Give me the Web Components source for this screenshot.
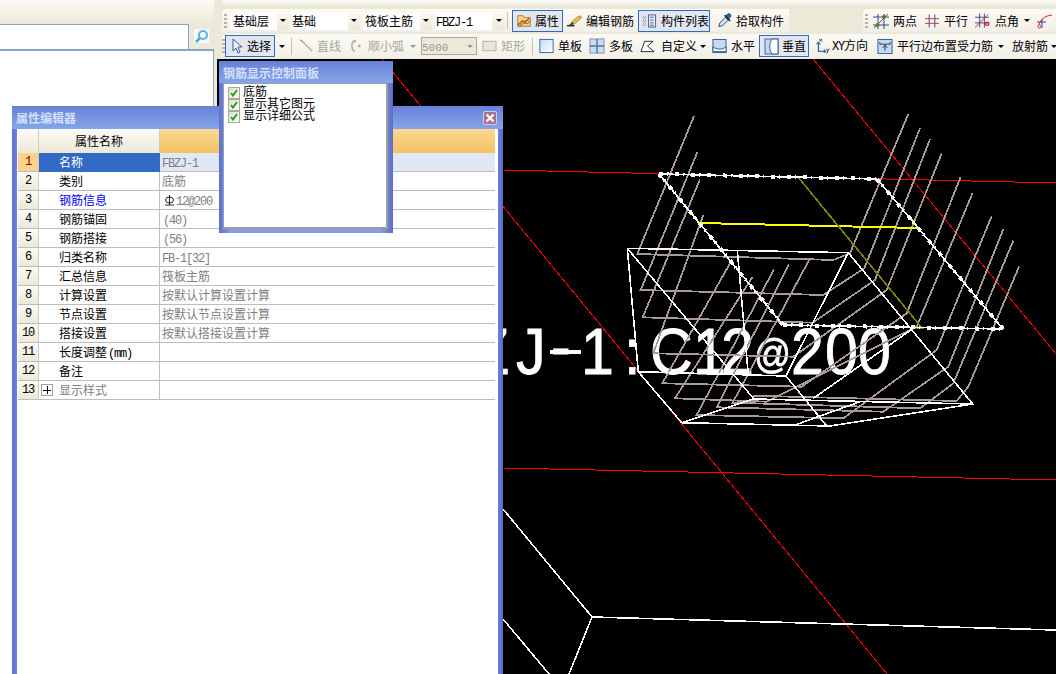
<!DOCTYPE html>
<html lang="zh"><head><meta charset="utf-8"><title>钢筋</title>
<style>
html,body{margin:0;padding:0;height:100%;overflow:hidden;background:#ece9d8}
body{font:12px/14px "Noto Sans CJK SC","Liberation Sans",sans-serif;color:#000}
svg{display:block}
</style></head><body>
<app-shell>
  <left-pane slot="left"></left-pane>
  <tb-stack slot="tools">
    <tb-bar style="height:5px;margin-bottom:4px" plain></tb-bar>
    <tb-row>
      <tb-bar style="width:567px;height:23px">
        <tb-combo style="width:59px;margin-right:2px" btn="12" pad="3">基础层</tb-combo>
        <tb-combo style="width:69px;margin-right:3px" btn="12" pad="1">基础</tb-combo>
        <tb-combo style="width:69px;margin-right:3px" btn="12" pad="2">筏板主筋</tb-combo>
        <tb-combo style="width:70px" btn="13" pad="1"><mono-t>FBZJ-1</mono-t></tb-combo>
        <tb-sep style="margin:0 4px 0 2px"></tb-sep>
        <tb-btn style="width:51px" active gap="3"><svg slot="icon" width="16" height="16" viewBox="0 0 18 16"><path d="M2 2h6l1 2h7v10H2z" fill="#f6d28a" stroke="#a8783a"/><path d="M2 13l5-5 3 1 5-4" fill="none" stroke="#c8601a" stroke-width="2"/><path d="M4 14l5-4 4 1 3-3" fill="none" stroke="#5a4a2a" stroke-width="1"/></svg>属性</tb-btn>
        <tb-btn style="width:73px" gap="3" pl="2"><svg slot="icon" width="17" height="16" viewBox="0 0 18 16"><path d="M1 13h8" stroke="#222" stroke-width="1.5"/><path d="M1 13c3-1 4-2 5-4l3 2c-2 2-5 2-8 2z" fill="#444"/><path d="M6 9l7-6 3 2-7 6z" fill="#f0c040" stroke="#8a6a20" stroke-width=".7"/><path d="M13 3l2-1 2 2-1 1z" fill="#d88"/></svg>编辑钢筋</tb-btn>
        <tb-btn style="width:72px;margin-left:2px" active gap="4"><svg slot="icon" width="15" height="16" viewBox="0 0 16 16"><path d="M1 3h3v2H1zM1 7h3v2H1zM1 11h3v2H1z" fill="none" stroke="#888" stroke-dasharray="1 1"/><rect x="7" y="1.5" width="7.5" height="13" fill="#e8f0fa" stroke="#557"/><path d="M8.500 4h4M8.500 7h4M8.500 10h4M8.500 12.500h4" stroke="#35a"/></svg>构件列表</tb-btn>
        <tb-btn style="width:75px;margin-left:2px" gap="3" pl="4"><svg slot="icon" width="16" height="17" viewBox="0 0 17 17"><path d="M2 15l1-4 6-6 3 3-6 6z" fill="#cde3f5" stroke="#345"/><path d="M9 4l2-2c2-2 5 1 3 3l-2 2z" fill="#1d6fb8" stroke="#123"/><path d="M8 3l6 6" stroke="#123" stroke-width="1.6"/></svg>拾取构件</tb-btn>
      </tb-bar>
      <tb-bar style="width:193px;height:23px;margin-left:74px">
        <tb-btn style="width:48px" gap="4" pl="1"><svg slot="icon" width="16" height="16" viewBox="0 0 16 16"><path d="M5 1v15M11 1v15M0 4h16M0 12h16" stroke="#334a8c"/><path d="M1 15L15 1" stroke="#e01818"/><circle cx="4.500" cy="12" r="2" fill="#3a8a2a"/><circle cx="11" cy="4" r="2" fill="#3a8a2a"/></svg>两点</tb-btn>
        <tb-btn style="width:50px" gap="5" pl="5"><svg slot="icon" width="14" height="14" viewBox="0 0 15 14"><path d="M4.500 0v14M10.500 0v14" stroke="#334a8c"/><path d="M0 4.500h15M0 9.500h15" stroke="#c03040"/></svg>平行</tb-btn>
        <tb-btn style="width:51px" gap="5" pl="5"><svg slot="icon" width="15" height="16" viewBox="0 0 16 16"><path d="M5 0v15M10 0v15M0 4h15M0 10h15" stroke="#334a8c"/><path d="M0 15L14 1" stroke="#e01818"/><circle cx="13" cy="11" r="1.800" fill="none" stroke="#e01818" stroke-width="1.300"/></svg>点角</tb-btn>
        <tb-arrow style="width:14px"></tb-arrow>
        <tb-btn style="width:22px" pl="2"><svg slot="icon" width="16" height="16" viewBox="0 0 16 16"><path d="M2 14C2 7 7 3 15 2" fill="none" stroke="#e01818"/><path d="M0 9h9M5 6v9" stroke="#334a8c"/><circle cx="2.500" cy="13.500" r="1.500" fill="#fff" stroke="#e01818"/></svg></tb-btn>
      </tb-bar>
    </tb-row>
    <tb-row style="margin-top:2px">
      <tb-bar style="width:834px;height:24px" tight>
        <tb-btn style="width:50px" active gap="4" pl="5"><svg slot="icon" width="12" height="16" viewBox="0 0 12 16"><path d="M2 1v12l3-3 2 5 2-1-2-5h4z" fill="#eef" stroke="#3a5a9a"/></svg>选择</tb-btn>
        <tb-arrow style="width:13px"></tb-arrow>
        <tb-sep style="margin:0 3px 0 3px"></tb-sep>
        <tb-btn style="width:50px" disabled gap="3" pl="3"><svg slot="icon" width="15" height="16" viewBox="0 0 17 16"><path d="M2 1l13 13" stroke="#b0b0a8" stroke-width="1.500"/><path d="M1 1l2 2" stroke="#888"/></svg>直线</tb-btn>
        <tb-btn style="width:60px" disabled gap="4" pl="3"><svg slot="icon" width="15" height="16" viewBox="0 0 16 16"><path d="M6 2C2 4 2 11 6 14" fill="none" stroke="#b0b0a8" stroke-width="1.500"/><path d="M4 1l4 1-2 3z" fill="#b0b0a8"/><circle cx="11" cy="8" r="1.500" fill="#b0b0a8"/></svg>顺小弧</tb-btn>
        <tb-arrow style="width:16px" disabled></tb-arrow>
        <tb-combo style="width:56px;height:18px" btn="13" dis><mono-t size="11">5000</mono-t></tb-combo>
        <tb-btn style="width:49px;margin-left:3px" disabled gap="4" pl="1"><svg slot="icon" width="15" height="14" viewBox="0 0 16 14"><rect x="1" y="2" width="14" height="10" fill="#e8e6dc" stroke="#b4b2a6"/></svg>矩形</tb-btn>
        <tb-sep style="margin:0 3px 0 3px"></tb-sep>
        <tb-btn style="width:48px" gap="4" pl="2"><svg slot="icon" width="15" height="16" viewBox="0 0 17 17"><defs><linearGradient id="g1" x1="0" y1="0" x2="1" y2="1"><stop offset="0" stop-color="#c4dcf6"/><stop offset="1" stop-color="#fff"/></linearGradient></defs><rect x="1" y="1" width="15" height="15" fill="url(#g1)" stroke="#2d5a9e"/></svg>单板</tb-btn>
        <tb-btn style="width:52px" gap="4" pl="4"><svg slot="icon" width="16" height="16" viewBox="0 0 17 17"><rect x="1" y="1" width="15" height="15" fill="#c8dcf2" stroke="#7a93b5"/><path d="M8.500 1v15M1 8.500h15" stroke="#56769f" stroke-width="1.500"/></svg>多板</tb-btn>
        <tb-btn style="width:62px" gap="6" pl="3"><svg slot="icon" width="15" height="14" viewBox="0 0 16 14"><path d="M1 13L5 2h9L8 7l7 6z" fill="#fff" stroke="#222"/></svg>自定义</tb-btn>
        <tb-arrow style="width:10px"></tb-arrow>
        <tb-btn style="width:51px" gap="4" pl="3"><svg slot="icon" width="15" height="16" viewBox="0 0 16 16"><rect x="1" y="1" width="14" height="14" fill="#c4d8f0" stroke="#2d5a9e"/><path d="M1 9c4 3 10 3 14 0v5H1z" fill="#fff" stroke="#2d5a9e"/></svg>水平</tb-btn>
        <tb-btn style="width:50px" active gap="3" pl="4"><svg slot="icon" width="15" height="17" viewBox="0 0 15 17"><rect x="1" y="1" width="13" height="15" fill="#c4d8f0" stroke="#4a6a9a"/><path d="M8 1c-3 4-3 11 0 15h6V1z" fill="#fff" stroke="#2d5a9e"/></svg>垂直</tb-btn>
        <tb-btn style="width:64px" gap="1" pl="4"><svg slot="icon" width="17" height="17" viewBox="0 0 19 17"><path d="M5 4v10h7" fill="none" stroke="#2d6ab0" stroke-width="1.500"/><path d="M2 6l3-3 3 3zM11 11l3 3-3 2z" fill="#2d6ab0"/><path d="M6 0l3 3M9 0L6 3M14 11l1.500 2 1.500-2M15.500 13l-1 3" stroke="#222" fill="none"/></svg><span><mono-t>XY</mono-t>方向</span></tb-btn>
        <tb-btn style="width:136px" gap="4" pl="3"><svg slot="icon" width="16" height="17" viewBox="0 0 17 17"><rect x="1" y="1" width="15" height="15" fill="#c4d8f0" stroke="#2d5a9e"/><path d="M3 6h11M3 6v-2M14 6v-2" stroke="#234" fill="none"/><path d="M8.500 7v6M6 10l2.500-3 2.500 3" stroke="#234" fill="none"/></svg>平行边布置受力筋<tb-arrow style="width:8px"></tb-arrow></tb-btn>
        <tb-btn style="width:51px" gap="0" pl="2">放射筋<tb-arrow style="width:12px"></tb-arrow></tb-btn>
      </tb-bar>
    </tb-row>
  </tb-stack>
  <cad-view slot="canvas"></cad-view>
  <prop-window slot="windows"></prop-window>
  <check-panel slot="windows"></check-panel>
</app-shell>
<script>
const def=(n,html,extra)=>{customElements.define(n,class extends HTMLElement{
  constructor(){super();this.attachShadow({mode:'open'}).innerHTML=html;if(extra)extra.call(this);}
});};
const MONO='font-family:"Liberation Mono","DejaVu Sans Mono",monospace;font-size:12px;letter-spacing:-1.2px';
def('app-shell',`<style>
:host{display:grid;grid-template-columns:217px 839px;grid-template-rows:59px 615px;width:1056px;height:674px;position:relative;overflow:hidden;background:#ece9d8}
.l{grid-row:1/3}.w{position:absolute;inset:0;pointer-events:none}
</style><div class="l"><slot name="left"></slot></div><div><slot name="tools"></slot></div><div><slot name="canvas"></slot></div><div class="w"><slot name="windows"></slot></div>`);
def('left-pane',`<style>
:host{display:flex;flex-direction:column;width:214px;height:674px;background:#fff}
.top{height:24px;background:linear-gradient(#fbfaf6,#ece9d8)}
.s{height:25px;display:flex;background:#ece9d8;border-bottom:2px solid #8aa5bf}
.i{width:189px;background:#fff;border:solid #8aa5bf;border-width:1px 1px 0 0;box-sizing:border-box;height:25px}
.m{flex:1;display:flex;align-items:center;justify-content:center}
.l{flex:1;border-right:1px solid #8aa5bf}
</style><div class="top"></div><div class="s"><div class="i"></div><div class="m"><svg width="17" height="15" viewBox="0 0 17 15"><rect x="1" y="0" width="15" height="14" fill="#f6f8fb"/><circle cx="10" cy="6" r="4" fill="#fff" stroke="#55b4ee" stroke-width="2.200"/><path d="M7 9l-4 4" stroke="#4aa2e0" stroke-width="2.500"/></svg></div></div><div class="l"></div>`);
def('tb-stack',`<style>:host{display:flex;flex-direction:column;height:59px;padding-left:5px;box-sizing:border-box;overflow:hidden}</style><slot></slot>`);
def('tb-row',`<style>:host{display:flex;flex:none}</style><slot></slot>`);
def('tb-bar',`<style>
:host{display:flex;align-items:center;box-sizing:border-box;background:linear-gradient(#fbfaf6,#f1efe5);border-radius:4px 0 0 4px;flex:none}
.g{width:3px;height:14px;margin:0 3px 0 2px;flex:none;background:repeating-linear-gradient(#b5b2a2 0 2px,transparent 2px 4px)}
:host([tight]) .g{margin:0}
:host([plain]) .g{display:none}
</style><div class="g"></div><slot></slot>`);
def('tb-sep',`<style>:host{display:block;width:1px;height:17px;background:#c5c2b2;flex:none}</style>`);
def('mono-t',`<style>:host{${MONO};display:inline}</style><slot></slot>`,function(){
  const s=this.getAttribute('size');if(s){this.style.fontSize=s+'px';this.style.letterSpacing='0';}});
def('tb-arrow',`<style>
:host{display:flex;align-items:center;justify-content:center;flex:none;height:100%}
i{display:block;border:solid transparent;border-width:3px 3px 0;border-top-color:#000}
:host([disabled]) i{border-top-color:#9a9a92}
</style><i></i>`);
customElements.define('tb-btn',class extends HTMLElement{
  constructor(){super();
    const g=this.getAttribute('gap')||'3',p=this.getAttribute('pl')||'3';
    this.attachShadow({mode:'open'}).innerHTML=`<style>
:host{display:flex;align-items:center;height:22px;box-sizing:border-box;border:1px solid transparent;padding-left:${p}px;gap:${g}px;white-space:nowrap;flex:none}
:host([active]){border-color:#316ac5;background:#e2e6ee}
:host([disabled]){color:#a5a59c}
::slotted(svg){flex:none}
</style><slot name="icon"></slot><slot></slot>`;}
});
customElements.define('tb-combo',class extends HTMLElement{
  constructor(){super();
    const b=this.getAttribute('btn')||'12',p=this.getAttribute('pad')||'3';
    this.attachShadow({mode:'open'}).innerHTML=`<style>
:host{display:flex;height:18px;box-sizing:border-box;flex:none;background:#fff}
:host([dis]){border:1px solid #aaa899;background:#ece9d8;color:#999}
.t{flex:1;padding-left:${p}px;line-height:18px;white-space:nowrap;overflow:hidden}
:host([dis]) .t{padding-left:0;line-height:16px}
.b{width:${b}px;background:linear-gradient(#fbfaf6,#ece9d8);display:flex;align-items:center;justify-content:center;flex:none}
:host([dis]) .b{background:none}
i{display:block;border:solid transparent;border-width:3px 3px 0;border-top-color:#000}
:host([dis]) i{border-top-color:#999}
</style><div class="t"><slot></slot></div><div class="b"><i></i></div>`;}
});
customElements.define('win-frame',class extends HTMLElement{
  constructor(){super();
    const h=this.getAttribute('th')||'22';
    this.attachShadow({mode:'open'}).innerHTML=`<style>
:host{display:flex;flex-direction:column;box-sizing:border-box;height:100%;background:linear-gradient(90deg,#5d72cf,#8a9ae6 12px,#8a9ae6 calc(100% - 12px),#5a6cc8);padding:0 5px;border-top:1px solid #5f83d8;pointer-events:auto}
.t{height:${h}px;flex:none;display:flex;align-items:center;justify-content:space-between;background:linear-gradient(#6a82d8,#84a6ea);margin:0 -5px;padding:0 6px 0 4px;color:#d3e0fa;font-weight:700;font-size:12px}
.c{flex:1;background:#fff;min-height:0;box-sizing:border-box}
</style><div class="t"><slot name="title"></slot><slot name="close"></slot></div><div class="c"><slot></slot></div>`;}
});
customElements.define('prop-window',class extends HTMLElement{
  constructor(){super();
    const rows=[['名称','<m>FBZJ-1</m>'],['类别','底筋'],['钢筋信息','<svg class="sym" width="11" height="11" viewBox="0 0 11 11"><ellipse cx="5.500" cy="5" rx="4" ry="3" fill="none" stroke="#222"/><path d="M5.500 0v10M1 10h9" stroke="#222"/></svg><m>12@200</m>'],['钢筋锚固','<m class="p">(40)</m>'],['钢筋搭接','<m class="p">(56)</m>'],['归类名称','<m>FB-1[32]</m>'],['汇总信息','筏板主筋'],['计算设置','按默认计算设置计算'],['节点设置','按默认节点设置计算'],['搭接设置','按默认搭接设置计算'],['长度调整<m class="k">(mm)</m>',''],['备注',''],['显示样式','']];
    const h=rows.map((r,i)=>{const n=i+1;
      const cl=n==1?' sel':'';
      const nm=n==3?' blue':n==13?' gr':'';
      const plus=n==13?'<b class="plus"></b>':'';
      return `<div class="n${cl}">${n}</div><div class="a${cl}${nm}">${plus}${r[0]}</div><div class="v${cl}">${r[1]}</div>`;}).join('');
    this.attachShadow({mode:'open'}).innerHTML=`<style>
:host{position:absolute;left:12px;top:106px;width:491px;height:600px;display:block}
.tbl{display:grid;grid-template-columns:21px 121px 1fr;grid-auto-rows:19px;margin-left:1px;width:477px;grid-template-rows:24px}
.tbl>div{box-sizing:border-box;border-bottom:1px solid #bdbdbd;border-right:1px solid #bdbdbd;line-height:18px;white-space:nowrap;overflow:hidden}
.hh{background:linear-gradient(#fbfaf6,#ece9d8);text-align:center;line-height:24px!important;border-bottom:0!important;border-right:1px solid #cfccbe!important}
.ho{background:linear-gradient(#fbd98f,#f3c164);border:0!important}
.n{background:linear-gradient(#fbfaf6,#ece9d8);text-align:center;${MONO};border-right-color:#cfccbe!important}
.n.sel{background:#fdd28a;color:#800000}
.a{padding-left:20px}
.a.sel{background:#316ac5;color:#fff;border-bottom:0;border-right:0}
.v{padding-left:2px;color:#808080;border-right:0!important}
.v.sel{background:#e0e8f5}
.blue{color:#00f}.gr{color:#808080;position:relative}
m{${MONO}}
.k{color:#000;margin-left:1px}
.p{margin-left:1px}
.sym{display:inline-block;vertical-align:-1px;margin:0 1px 0 2px}
.plus{position:absolute;left:2px;top:3px;width:12px;height:12px;border:1px solid #a0a0a0;box-sizing:border-box;background:linear-gradient(#000,#000) center/8px 1px no-repeat,linear-gradient(#000,#000) center/1px 8px no-repeat,#fff}
.x{width:14px;height:14px;box-sizing:border-box;border:1px solid #c8cdf0;background:#a8708c;border-radius:2px}
.x svg{display:block}
</style><win-frame><span slot="title">属性编辑器</span><span slot="close" class="x"><svg width="12" height="12" viewBox="0 0 12 12"><path d="M2.500 2.500l7 7M9.500 2.500l-7 7" stroke="#fff" stroke-width="2.400"/></svg></span><div class="tbl"><div class="hh"></div><div class="hh">属性名称</div><div class="ho"></div>${h}</div></win-frame>`;}
});
customElements.define('check-panel',class extends HTMLElement{
  constructor(){super();
    const it=['底筋','显示其它图元','显示详细公式'].map(t=>`<div class="r"><span class="c"><svg width="8" height="8" viewBox="0 0 8 8"><path d="M1 4l2 2.500L7 1" fill="none" stroke="#1fa51f" stroke-width="2"/></svg></span><span class="tx">${t}</span></div>`).join('');
    this.attachShadow({mode:'open'}).innerHTML=`<style>
:host{position:absolute;left:219px;top:61px;width:174px;height:172px;display:block}
.b{box-sizing:border-box;height:100%;border:1px solid #8f9fb8;border-right:2px solid #9a9f90;border-bottom:2px solid #9a9f90;padding:3px 0 0 4px;margin:0 0 0 -1px;background:#fff;width:165px}
.r{display:flex;align-items:center;height:12px;line-height:12px;white-space:nowrap}
.tx{position:relative;top:-2px}
.c{width:12px;height:12px;box-sizing:border-box;border:1px solid #a8a899;background:linear-gradient(135deg,#dedbcf,#fff);margin-right:3px;display:flex;align-items:center;justify-content:center;flex:none}
</style><win-frame th="21" style="height:172px;padding-bottom:4px"><span slot="title">钢筋显示控制面板</span><div class="b">${it}</div></win-frame>`;}
});
customElements.define('cad-view',class extends HTMLElement{
  constructor(){super();
    const z=s=>s.trim().split(/\s+/).map(p=>{const[a,b]=p.split(',').map(Number);return (620+a/3).toFixed(1)+','+(100+b/3).toFixed(1)}).join(' ');
    const bars=[
     '222,48 52,462 640,480 690,460 865,42',
     '232,157 62,570 610,585 733,505 900,85',
     '240,238 68,652 578,668 765,540 930,118',
     '250,345 100,760 520,770 800,570 965,160',
     '330,490 127,850 545,860 860,640 1022,230',
     '398,530 165,895 440,905 890,680 1058,278',
     '462,508 230,945 670,955 950,750 1115,348',
     '507,493 290,922 790,935 985,800 1150,388',
     '570,475 338,908 900,925 1000,850 1180,422',
     '400,887 1010,903 1045,860 1197,500'
    ].map(p=>`<polyline points="${z(p)}"/>`).join('');
    const wh=[
     '22,445 685,458 1058,912 630,978 185,968 55,815 22,445',
     '352,450 385,825','22,445 400,895','685,458 498,828','55,815 498,828 620,978',
     '185,968 400,897 1058,912','525,975 720,905','580,895 880,685'
    ].map(p=>`<polyline points="${z(p)}"/>`).join('');
    const dash=(a,b,c,d)=>`<line x1="${a}" y1="${b}" x2="${c}" y2="${d}" stroke-width="1.600"/><line x1="${a}" y1="${b}" x2="${c}" y2="${d}" stroke-width="4" stroke-dasharray="4 12"/><line x1="${a}" y1="${b}" x2="${c}" y2="${d}" stroke-width="3.500" stroke-dasharray="1.500 6.500"/>`;
    const sx=.91, X=a=>a.map(v=>(v/sx).toFixed(1)).join(' ');
    this.attachShadow({mode:'open'}).innerHTML=`<style>
:host{display:block;width:839px;height:615px;background:#000;overflow:hidden}
text{font-family:"Liberation Sans",sans-serif;font-size:65px;fill:#fff;stroke:#fff;stroke-width:.8px;filter:blur(.5px)}
</style><svg width="839" height="615" viewBox="217 59 839 615" fill="none">
<g stroke="#f00" stroke-width="1" shape-rendering="crispEdges">
<path d="M503 170L1056 183M503 468L1056 480M813 59L1056 354M382 59L887 674"/>
</g>
<g stroke="#fff" stroke-width="1.600" shape-rendering="crispEdges">
<path d="M503 509L592 617L1056 630M592 617L569 674M503 619L549 674"/></g>
<text transform="scale(${sx} 1)"><tspan x="${X([473,516,551,581,612,624,640,650,693,721])}" y="374 374 369 374 374 374 374 374 374 374">ZJ-1 : C12</tspan><tspan x="${X([754])}" y="368" font-size="40">@</tspan><tspan x="${X([791,825,858])}" y="374">200</tspan></text>
<rect x="550" y="350" width="31" height="4" fill="#fff"/>
<g stroke="#a89c94" stroke-width="1.800" shape-rendering="crispEdges">${bars}</g>
<g stroke="#fff" stroke-width="1.600" shape-rendering="crispEdges">${wh}</g>
<polyline points="692,214 699,223 918,228 910,217" stroke="#ff0" stroke-width="2" shape-rendering="crispEdges"/>
<polyline points="788,177 798,177 922,328 913,328" stroke="#808000" stroke-width="1.700" shape-rendering="crispEdges"/>
<g stroke="#fff" shape-rendering="crispEdges">
${dash(659,174,877,179)}${dash(877,179,1003,329)}${dash(783,325,1003,329)}${dash(659,174,783,325)}
</g>
</svg>`;}
});
</script>
</body></html>
